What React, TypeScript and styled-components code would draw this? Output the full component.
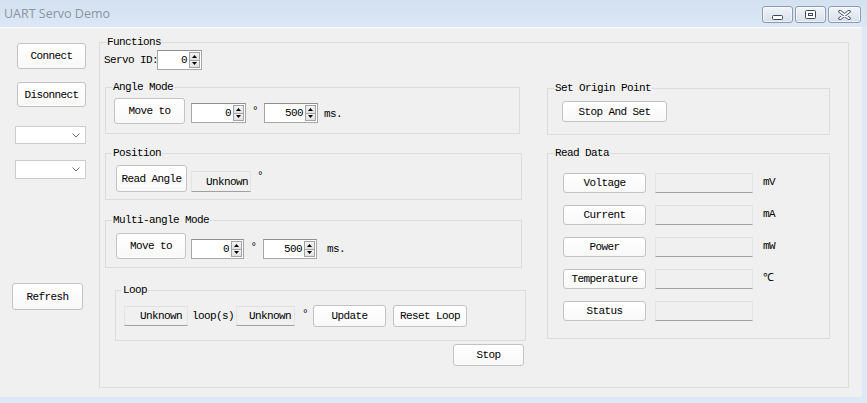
import React from "react";
import styled, { createGlobalStyle } from "styled-components";

const GlobalStyle = createGlobalStyle`
  * { box-sizing: border-box; }
  html, body { margin: 0; padding: 0; }
  body { background: #dde9f6; overflow: hidden; }
`;

const MONO = `"Liberation Mono", "DejaVu Sans Mono", monospace`;

const Window = styled.div`
  width: 867px;
  height: 403px;
  display: flex;
  flex-direction: column;
  background: #dde9f6;
  font-family: ${MONO};
  font-size: 11px;
  letter-spacing: -0.6px;
  color: #000;
`;

const TitleBar = styled.div`
  flex: none;
  height: 27px;
  display: flex;
  align-items: flex-start;
  padding: 0 6px 0 4px;
  background: linear-gradient(to bottom, #d3e1f0, #dbe7f4);
`;

const TitleText = styled.div`
  flex: 1;
  font-family: "Open Sans", "Noto Sans", sans-serif;
  font-size: 12.5px;
  letter-spacing: 0;
  line-height: 16px;
  margin-top: 6px;
  color: #8995a4;
`;

const WinControls = styled.div`
  display: flex;
  gap: 2px;
  margin-top: 6px;
`;

const WinButton = styled.div<{ $w: number }>`
  width: ${(p) => p.$w}px;
  height: 17px;
  border: 1px solid #8d9bb0;
  border-radius: 3px;
  background: linear-gradient(to bottom, #f2f5f9 0%, #e4eaf2 50%, #d7e0eb 100%);
  box-shadow: inset 0 0 0 1px rgba(255, 255, 255, 0.55);
  display: flex;
  align-items: center;
  justify-content: center;
`;

const Client = styled.div`
  flex: none;
  width: 862px;
  height: 370px;
  background: #f0f0f0;
  box-shadow: inset 0 1px 0 #f9fafc;
  display: flex;
  align-items: flex-start;
`;

const LeftColumn = styled.div`
  flex: none;
  width: 99px;
  display: flex;
  flex-direction: column;
  align-items: flex-start;
`;

const PushButton = styled.button<{ $w: number; $h: number; $m?: string }>`
  flex: none;
  width: ${(p) => p.$w}px;
  height: ${(p) => p.$h}px;
  margin: ${(p) => p.$m || "0"};
  padding: 0;
  border: 1px solid #c3c3c3;
  border-radius: 3px;
  background: linear-gradient(to bottom, #ffffff, #f8f8f8);
  font: inherit;
  letter-spacing: inherit;
  color: #000;
  display: flex;
  align-items: center;
  justify-content: center;
  white-space: nowrap;
`;

const Combo = styled.div<{ $h: number; $m: string }>`
  width: 71px;
  height: ${(p) => p.$h}px;
  margin: ${(p) => p.$m};
  background: #fff;
  border: 1px solid #cdcdcd;
  display: flex;
  align-items: center;
  justify-content: flex-end;
  padding-right: 5px;
`;

const Group = styled.div<{ $w: number; $h: number; $m?: string }>`
  position: relative;
  flex: none;
  width: ${(p) => p.$w}px;
  height: ${(p) => p.$h}px;
  margin: ${(p) => p.$m || "0"};
  border: 1px solid #dcdcdc;
`;

const GroupTitle = styled.span`
  position: absolute;
  top: -7px;
  left: 6px;
  padding: 0 1px;
  line-height: 12px;
  background: #f0f0f0;
  white-space: nowrap;
`;

const FunctionsBody = styled.div`
  display: flex;
  flex-direction: column;
`;

const ServoRow = styled.div`
  display: flex;
  align-items: center;
  height: 20px;
  margin: 7px 0 0 4px;
`;

const FieldLabel = styled.span<{ $w: number }>`
  flex: none;
  width: ${(p) => p.$w}px;
  white-space: nowrap;
`;

const Columns = styled.div`
  display: flex;
  align-items: flex-start;
  margin: 17px 0 0 5px;
`;

const LeftCol = styled.div`
  flex: none;
  width: 421px;
  display: flex;
  flex-direction: column;
  align-items: flex-start;
`;

const RightCol = styled.div`
  flex: none;
  width: 283px;
  margin-left: 21px;
  padding-top: 1px;
  display: flex;
  flex-direction: column;
`;

const Row = styled.div<{ $p: string }>`
  display: flex;
  align-items: flex-start;
  padding: ${(p) => p.$p};
`;

const CenterRow = styled.div<{ $p: string }>`
  display: flex;
  align-items: center;
  height: 22px;
  box-sizing: content-box;
  padding: ${(p) => p.$p};
`;

const SpinFrame = styled.div<{ $w: number; $h: number; $m?: string }>`
  flex: none;
  width: ${(p) => p.$w}px;
  height: ${(p) => p.$h}px;
  margin: ${(p) => p.$m || "0"};
  display: flex;
  background: #fff;
  border: 1px solid #a6a6a6;
  border-top-color: #8f8f8f;
`;

const SpinValue = styled.span`
  flex: 1;
  display: flex;
  align-items: center;
  justify-content: flex-end;
  padding-right: 2px;
`;

const SpinArrows = styled.div`
  flex: none;
  width: 11px;
  margin: 1px 1px 1px 0;
  display: flex;
  flex-direction: column;
`;

const ArrowCell = styled.div<{ $down?: boolean }>`
  flex: 1;
  display: flex;
  align-items: center;
  justify-content: center;
  background: linear-gradient(to bottom, #f3f3f3, #e1e1e1);
  border: 1px solid #a3a3a3;
  ${(p) => (p.$down ? "border-top: none;" : "")}
`;

const Unit = styled.span<{ $w?: number; $m?: string; $center?: boolean }>`
  flex: none;
  ${(p) => (p.$w ? `width: ${p.$w}px;` : "")}
  margin: ${(p) => p.$m || "0"};
  line-height: 20px;
  text-align: ${(p) => (p.$center ? "center" : "left")};
  white-space: nowrap;
`;

const Readout = styled.div<{ $w: number; $h: number; $m?: string; $pr?: number }>`
  flex: none;
  width: ${(p) => p.$w}px;
  height: ${(p) => p.$h}px;
  margin: ${(p) => p.$m || "0"};
  padding-right: ${(p) => p.$pr ?? 3}px;
  background: #f0f0f0;
  border-top: 1px solid #e0e0e0;
  border-left: 1px solid #e4e4e4;
  border-right: 1px solid #e4e4e4;
  border-bottom: 1px solid #a0a0a0;
  display: flex;
  align-items: center;
  justify-content: flex-end;
  white-space: nowrap;
`;

const DataList = styled.div`
  display: flex;
  flex-direction: column;
  gap: 12px;
  padding: 19px 0 0 15px;
`;

const DataRow = styled.div`
  display: flex;
  align-items: center;
  height: 20px;
`;

const UpTri = () => (
  <svg width="5" height="3" viewBox="0 0 5 3">
    <polygon points="0,3 5,3 2.5,0" fill="#000" />
  </svg>
);
const DownTri = () => (
  <svg width="5" height="3" viewBox="0 0 5 3">
    <polygon points="0,0 5,0 2.5,3" fill="#000" />
  </svg>
);

const Spin: React.FC<{ value: string; w: number; h?: number; m?: string }> = ({
  value,
  w,
  h = 20,
  m,
}) => (
  <SpinFrame $w={w} $h={h} $m={m}>
    <SpinValue>{value}</SpinValue>
    <SpinArrows>
      <ArrowCell>
        <UpTri />
      </ArrowCell>
      <ArrowCell $down>
        <DownTri />
      </ArrowCell>
    </SpinArrows>
  </SpinFrame>
);

const Chevron = () => (
  <svg width="8" height="5" viewBox="0 0 8 5">
    <polyline points="0.5,0.5 4,4 7.5,0.5" fill="none" stroke="#6d6d6d" strokeWidth="1" />
  </svg>
);

const MinGlyph = () => (
  <svg width="11" height="12" viewBox="0 0 11 12">
    <rect x="0.5" y="6.5" width="10" height="4" rx="1" fill="#fff" stroke="#3d4757" />
  </svg>
);
const MaxGlyph = () => (
  <svg width="11" height="10" viewBox="0 0 11 10">
    <rect x="0.5" y="0.5" width="10" height="8" rx="1" fill="#fff" stroke="#3d4757" />
    <rect x="3.5" y="3.5" width="4" height="2" fill="#fff" stroke="#3d4757" />
  </svg>
);
const CloseGlyph = () => (
  <svg width="13" height="10" viewBox="0 0 13 10">
    <path d="M2 1.5 L11 8.5 M11 1.5 L2 8.5" stroke="#3d4757" strokeWidth="3.4" strokeLinecap="round" />
    <path d="M2 1.5 L11 8.5 M11 1.5 L2 8.5" stroke="#fff" strokeWidth="1.6" strokeLinecap="round" />
  </svg>
);

const readData = [
  { label: "Voltage", unit: "mV" },
  { label: "Current", unit: "mA" },
  { label: "Power", unit: "mW" },
  { label: "Temperature", unit: "℃" },
  { label: "Status", unit: "" },
];

export default function App() {
  return (
    <>
      <GlobalStyle />
      <Window>
        <TitleBar>
          <TitleText>UART Servo Demo</TitleText>
          <WinControls>
            <WinButton $w={31}>
              <MinGlyph />
            </WinButton>
            <WinButton $w={31}>
              <MaxGlyph />
            </WinButton>
            <WinButton $w={33}>
              <CloseGlyph />
            </WinButton>
          </WinControls>
        </TitleBar>
        <Client>
          <LeftColumn>
            <PushButton $w={69} $h={26} $m="16px 0 0 17px">
              Connect
            </PushButton>
            <PushButton $w={69} $h={25} $m="13px 0 0 17px">
              Disonnect
            </PushButton>
            <Combo $h={18} $m="19px 0 0 15px">
              <Chevron />
            </Combo>
            <Combo $h={19} $m="16px 0 0 15px">
              <Chevron />
            </Combo>
            <PushButton $w={71} $h={27} $m="104px 0 0 12px">
              Refresh
            </PushButton>
          </LeftColumn>

          <Group $w={750} $h={346} $m="15px 0 0 0">
            <GroupTitle>Functions</GroupTitle>
            <FunctionsBody>
              <ServoRow>
                <FieldLabel $w={53}>Servo ID:</FieldLabel>
                <Spin value="0" w={45} />
              </ServoRow>
              <Columns>
                <LeftCol>
                  <Group $w={415} $h={47}>
                    <GroupTitle>Angle Mode</GroupTitle>
                    <Row $p="10px 0 0 8px">
                      <PushButton $w={71} $h={26}>
                        Move to
                      </PushButton>
                      <Spin value="0" w={55} m="5px 0 0 6px" />
                      <Unit $w={18} $center $m="3px 0 0 0">
                        °
                      </Unit>
                      <Spin value="500" w={54} m="5px 0 0 0" />
                      <Unit $m="6px 0 0 6px">ms.</Unit>
                    </Row>
                  </Group>

                  <Group $w={417} $h={47} $m="19px 0 0 0">
                    <GroupTitle>Position</GroupTitle>
                    <Row $p="11px 0 0 10px">
                      <PushButton $w={71} $h={27}>
                        Read Angle
                      </PushButton>
                      <Readout $w={60} $h={21} $m="6px 0 0 4px" $pr={2}>
                        Unknown
                      </Readout>
                      <Unit $m="1px 0 0 6px">°</Unit>
                    </Row>
                  </Group>

                  <Group $w={417} $h={48} $m="20px 0 0 0">
                    <GroupTitle>Multi-angle Mode</GroupTitle>
                    <Row $p="12px 0 0 10px">
                      <PushButton $w={70} $h={26}>
                        Move to
                      </PushButton>
                      <Spin value="0" w={53} m="6px 0 0 5px" />
                      <Unit $w={19} $center $m="4px 0 0 0">
                        °
                      </Unit>
                      <Spin value="500" w={54} m="6px 0 0 0" />
                      <Unit $m="6px 0 0 10px">ms.</Unit>
                    </Row>
                  </Group>

                  <Group $w={411} $h={51} $m="22px 0 0 10px">
                    <GroupTitle>Loop</GroupTitle>
                    <CenterRow $p="14px 0 0 8px">
                      <Readout $w={64} $h={20} $pr={5}>
                        Unknown
                      </Readout>
                      <Unit $m="0 0 0 4px">loop(s)</Unit>
                      <Readout $w={59} $h={20} $m="0 0 0 2px" $pr={3}>
                        Unknown
                      </Readout>
                      <Unit $m="-4px 0 0 7px">°</Unit>
                      <PushButton $w={73} $h={22} $m="0 0 0 5px">
                        Update
                      </PushButton>
                      <PushButton $w={74} $h={22} $m="0 0 0 7px">
                        Reset Loop
                      </PushButton>
                    </CenterRow>
                  </Group>

                  <PushButton $w={71} $h={22} $m="3px 0 0 348px">
                    Stop
                  </PushButton>
                </LeftCol>

                <RightCol>
                  <Group $w={283} $h={47}>
                    <GroupTitle>Set Origin Point</GroupTitle>
                    <Row $p="12px 0 0 14px">
                      <PushButton $w={105} $h={21}>
                        Stop And Set
                      </PushButton>
                    </Row>
                  </Group>
                  <Group $w={283} $h={186} $m="18px 0 0 0">
                    <GroupTitle>Read Data</GroupTitle>
                    <DataList>
                      {readData.map((d) => (
                        <DataRow key={d.label}>
                          <PushButton $w={83} $h={20}>
                            {d.label}
                          </PushButton>
                          <Readout $w={98} $h={20} $m="0 0 0 9px" />
                          <Unit $m="-2px 0 0 10px">{d.unit}</Unit>
                        </DataRow>
                      ))}
                    </DataList>
                  </Group>
                </RightCol>
              </Columns>
            </FunctionsBody>
          </Group>
        </Client>
      </Window>
    </>
  );
}
